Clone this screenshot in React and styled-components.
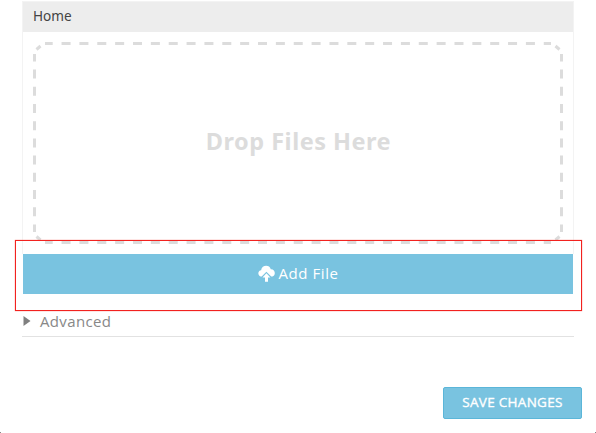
import React from 'react';
import styled, { createGlobalStyle } from 'styled-components';

const GlobalStyle = createGlobalStyle`
  * { box-sizing: border-box; }
  body { margin: 0; background: #fff; font-family: "Open Sans", sans-serif; }
`;
const Page = styled.main`
  position: relative;
  width: 596px;
  height: 433px;
  padding: 1px 14px 0 22px;
  overflow: hidden;
  display: flex;
  flex-direction: column;
`;
const Panel = styled.section`
  width: 552px;
  height: 253px;
  border: 1px solid #f3f3f3;
  border-bottom: 0;
`;
const PanelHeader = styled.header`
  height: 30px;
  padding-left: 10px;
  background: #ededed;
  color: #444;
  font: 13.6px/28px "Noto Sans", sans-serif;
`;
const DropZone = styled.div`
  position: relative;
  width: 530px;
  height: 202px;
  margin: 10px;
  padding: 0 0 4px 1px;
  display: flex;
  align-items: center;
  justify-content: center;
`;
const Outline = styled.svg`
  position: absolute;
  inset: 0;
`;
const DropLabel = styled.span`
  color: #dcdcdc;
  font: 700 23.5px/30px "Noto Sans", sans-serif;
  letter-spacing: 0.5px;
  white-space: nowrap;
`;
const AddButton = styled.button`
  width: 550px;
  height: 40px;
  margin-left: 1px;
  padding: 0 0 2px;
  border: 0;
  background: #79c3e0;
  color: #fff;
  display: flex;
  align-items: center;
  justify-content: center;
  gap: 4px;
  font: 400 15px/20px "Open Sans", sans-serif;
  letter-spacing: 0.55px;
`;
const Advanced = styled.div`
  width: 552px;
  height: 43px;
  padding-left: 1px;
  display: flex;
  align-items: flex-end;
  padding-bottom: 5px;
  gap: 9px;
  border-bottom: 1px solid #e2e2e2;
  color: #888;
  font: 400 15px/20px "Open Sans", sans-serif;
  letter-spacing: 0.35px;
`;
const Arrow = styled.svg`
  margin-bottom: 5px;
`;
const SaveButton = styled.button`
  align-self: flex-end;
  width: 139px;
  height: 32px;
  margin-top: 50px;
  padding: 0 0 2px;
  border: 1px solid #5bb6d9;
  border-radius: 2px;
  background: #79c3e0;
  color: #fff;
  font: 400 13.5px/28px "Open Sans", sans-serif;
  letter-spacing: 0.3px;
  -webkit-text-stroke: 0.35px #fff;
`;
const Highlight = styled.div`
  position: absolute;
  left: 15px;
  top: 240px;
  width: 567px;
  height: 71px;
  border: 1px solid #f2221f;
  box-shadow: 0 0 1px rgba(242, 34, 31, 0.7);
  pointer-events: none;
`;
const EdgeMark = styled.i`
  position: absolute;
  bottom: 0;
  ${({ $side }) => $side}: 0;
  width: 1px;
  height: 1px;
  background: #888;
`;

export default function App() {
  return (
    <>
      <GlobalStyle />
      <Page>
        <Panel>
          <PanelHeader>Home</PanelHeader>
          <DropZone>
            <Outline width="530" height="202" fill="none" stroke="#dcdcdc" strokeWidth="3">
              <path d="M12 1.5H518M12 200.5H518" strokeDasharray="9 8.86" strokeDashoffset="1.3" />
              <path d="M1.5 12V190M528.5 12V190" strokeDasharray="9 8.2" strokeDashoffset="1.6" />
              <path d="M3.5 7.5L7.5 4M522.5 4L526.5 7.5M3.5 194.5L7.5 198M522.5 198L526.5 194.5" />
            </Outline>
            <DropLabel>Drop Files Here</DropLabel>
          </DropZone>
        </Panel>
        <AddButton>
          <svg width="17" height="17" viewBox="0 0 17 17" fill="#fff">
            <path d="M2.6 11.5C-.9 10 .0 5.3 3.1 5.2 3.8-.3 11.6-.6 12.8 4.2c4.8-.2 5.2 6.2 1.6 7.3H13.2L8.4 6.7 3.7 11.5Z" />
            <path d="M8.4 8.2l4 4.2H10V16.7H7V12.4H4.5Z" />
          </svg>
          <span>Add File</span>
        </AddButton>
        <Advanced>
          <Arrow width="8" height="10" viewBox="0 0 8 10"><path d="M.5 0L7.5 5L.5 10Z" fill="#808080" /></Arrow>
          <span>Advanced</span>
        </Advanced>
        <SaveButton>SAVE CHANGES</SaveButton>
        <Highlight />
        <EdgeMark $side="left" />
        <EdgeMark $side="right" />
      </Page>
    </>
  );
}
